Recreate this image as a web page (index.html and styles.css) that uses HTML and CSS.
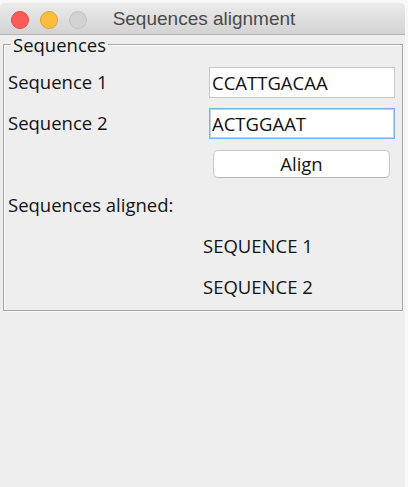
FILE: index.html
```html
<!DOCTYPE html>
<html lang="en">
<head>
<meta charset="utf-8">
<title>Sequences alignment</title>
<link rel="stylesheet" href="styles.css">
</head>
<body>
<div class="window">
  <header class="titlebar">
    <div class="lights">
      <span class="light light-close"></span>
      <span class="light light-min"></span>
      <span class="light light-max"></span>
    </div>
    <div class="title">Sequences alignment</div>
  </header>
  <main class="content">
    <fieldset class="panel">
      <legend class="panel-legend">Sequences</legend>
      <div class="form">
        <label class="label" for="seq1">Sequence 1</label>
        <input class="field" id="seq1" type="text" value="CCATTGACAA">
        <label class="label" for="seq2">Sequence 2</label>
        <input class="field field-focus" id="seq2" type="text" value="ACTGGAAT">
        <span></span>
        <button class="button" type="button">Align</button>
      </div>
      <div class="results">
        <div class="results-title">Sequences aligned:</div>
        <div class="result">SEQUENCE 1</div>
        <div class="result">SEQUENCE 2</div>
      </div>
    </fieldset>
  </main>
</div>
</body>
</html>
```

FILE: styles.css
```css
* { box-sizing: border-box; }

html, body {
  margin: 0;
  padding: 0;
  height: 100%;
}

body {
  background: #f8f8f8;
  font-family: "Open Sans", "Noto Sans", sans-serif;
  font-size: 18.5px;
  color: #141414;
  overflow: hidden;
}

.window {
  width: 405px;
  height: 484px;
  margin-top: 3px;
  background: #eeeeee;
  border-radius: 5px 5px 0 0;
  display: flex;
  flex-direction: column;
}

.titlebar {
  position: relative;
  height: 32px;
  flex: none;
  background: linear-gradient(#ebebeb, #d3d3d3);
  border-bottom: 1px solid #b4b4b4;
  border-radius: 5px 5px 0 0;
  display: flex;
  align-items: center;
  justify-content: center;
}

.lights {
  position: absolute;
  left: 11px;
  top: 8px;
  display: flex;
  gap: 11px;
}

.light {
  width: 18px;
  height: 18px;
  border-radius: 50%;
  display: block;
}

.light-close { background: #fc5b57; border: 1px solid #e2463f; }
.light-min { background: #fdbd3f; border: 1px solid #e0a22f; }
.light-max { background: #d3d3d3; border: 1px solid #c2c2c2; }

.title {
  font-family: "Liberation Sans", Arial, sans-serif;
  font-size: 19px;
  color: #4a4a4a;
  line-height: 22px;
  margin-left: 3px;
  margin-top: 1px;
}

.content {
  flex: 1;
  padding: 0 2px 0 3px;
}

.panel {
  margin: 0;
  padding: 14px 7px 11px 4px;
  border: 1px solid #a6a6a6;
  box-shadow: 1px 1px 0 #fbfbfb, inset 1px 1px 0 #fbfbfb;
  min-width: 0;
  width: 400px;
}

.panel-legend {
  margin-left: 3px;
  padding: 2px 2px 0 2px;
  line-height: 16px;
  color: #141414;
}

.form {
  display: grid;
  grid-template-columns: 1fr 186px;
  grid-auto-rows: auto;
  row-gap: 10px;
  align-items: center;
}

.label {
  line-height: 24px;
  padding-bottom: 2px;
}

.field {
  display: block;
  width: 186px;
  height: 31px;
  margin: 0;
  padding: 0 2px;
  border: 1px solid #c8c8c8;
  background: #ffffff;
  font-family: inherit;
  font-size: 18.5px;
  color: #111111;
  outline: none;
}

.field-focus {
  border-color: #7eb0ec;
  box-shadow: inset 0 0 0 1px #b8d3f4;
}

.button {
  margin: 1px 5px 0 4px;
  height: 28px;
  padding: 0;
  background: #ffffff;
  border: 1px solid #c8c8c8;
  border-bottom-color: #b5b5b5;
  border-radius: 5px;
  font-family: inherit;
  font-size: 18.5px;
  color: #141414;
  line-height: 24px;
}

.results {
  margin-top: 15px;
  display: flex;
  flex-direction: column;
  gap: 17px;
}

.results-title {
  line-height: 24px;
}

.result {
  line-height: 24px;
  padding-left: 195px;
}
```
